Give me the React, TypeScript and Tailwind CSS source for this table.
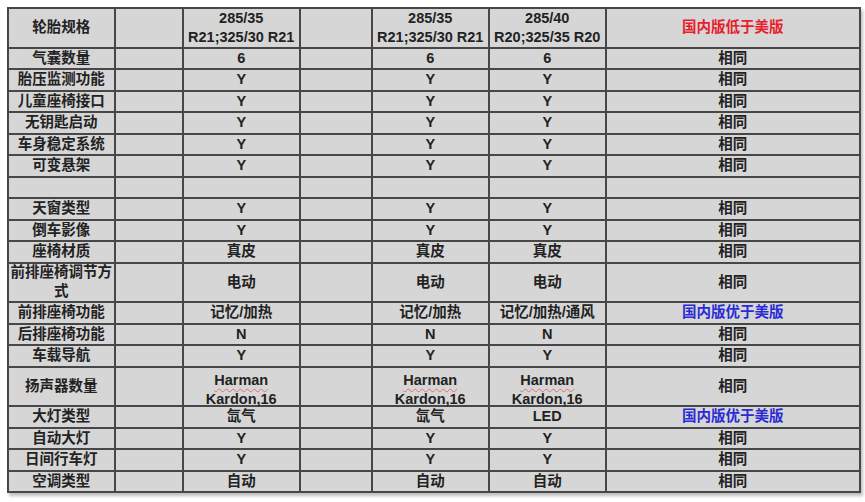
import React from "react";

type Cell = { t: string; c?: "red" | "blue"; hk?: boolean };
type Row = { cells: (string | Cell)[]; tall?: boolean };

const HK: Cell = { t: "", hk: true };
const Y4 = ["", "Y", "", "Y", "Y", "相同"];

const rows: Row[] = [
  {
    tall: true,
    cells: [
      "轮胎规格",
      "",
      "285/35\nR21;325/30 R21",
      "",
      "285/35\nR21;325/30 R21",
      "285/40\nR20;325/35 R20",
      { t: "国内版低于美版", c: "red" },
    ],
  },
  { cells: ["气囊数量", "", "6", "", "6", "6", "相同"] },
  { cells: ["胎压监测功能", ...Y4] },
  { cells: ["儿童座椅接口", ...Y4] },
  { cells: ["无钥匙启动", ...Y4] },
  { cells: ["车身稳定系统", ...Y4] },
  { cells: ["可变悬架", ...Y4] },
  { cells: ["", "", "", "", "", "", ""] },
  { cells: ["天窗类型", ...Y4] },
  { cells: ["倒车影像", ...Y4] },
  { cells: ["座椅材质", "", "真皮", "", "真皮", "真皮", "相同"] },
  { tall: true, cells: ["前排座椅调节方式", "", "电动", "", "电动", "电动", "相同"] },
  {
    cells: [
      "前排座椅功能",
      "",
      "记忆/加热",
      "",
      "记忆/加热",
      "记忆/加热/通风",
      { t: "国内版优于美版", c: "blue" },
    ],
  },
  { cells: ["后排座椅功能", "", "N", "", "N", "N", "相同"] },
  { cells: ["车载导航", ...Y4] },
  { tall: true, cells: ["扬声器数量", "", HK, "", HK, HK, "相同"] },
  { cells: ["大灯类型", "", "氙气", "", "氙气", "LED", { t: "国内版优于美版", c: "blue" }] },
  { cells: ["自动大灯", ...Y4] },
  { cells: ["日间行车灯", ...Y4] },
  { cells: ["空调类型", "", "自动", "", "自动", "自动", "相同"] },
];

function Content({ v }: { v: string | Cell }) {
  const cell: Cell = typeof v === "string" ? { t: v } : v;
  if (cell.hk) {
    return (
      <div className="leading-[19px] text-[#222222] pt-[7px]">
        <div>
          <span className="underline decoration-wavy decoration-[#e07070] decoration-1 underline-offset-[3px]">Harman</span>
        </div>
        <div>
          <span className="underline decoration-wavy decoration-[#e07070] decoration-1 underline-offset-[3px]">Kardon</span>,16
        </div>
      </div>
    );
  }
  const color =
    cell.c === "red" ? "text-[#e8202c]" : cell.c === "blue" ? "text-[#2b2bd6]" : "text-[#222222]";
  return (
    <div className={`${color} leading-[19px] whitespace-pre-line`}>{cell.t}</div>
  );
}

export default function App() {
  return (
    <div className="bg-white w-[865px] h-[502px] pt-[7px] pl-[7px]">
      <div
        className="inline-grid grid-cols-[105.5px_66.5px_115.5px_70.5px_115.5px_115.5px_252.5px] gap-x-[1.5px] gap-y-[2px] px-[1.5px] py-[2px] bg-[#474747] shadow-[2px_3px_3px_rgba(0,0,0,0.25)] font-bold text-[14.5px]"
        style={{ fontFamily: '"Liberation Sans", Arial, "Noto Sans CJK SC", sans-serif' }}
      >
        {rows.map((r, i) =>
          r.cells.map((c, j) => (
            <div
              key={`${i}-${j}`}
              className={`bg-[#d6d6d6] flex items-center justify-center text-center overflow-visible ${
                r.tall ? "h-[37.5px]" : "h-[19.5px]"
              }`}
            >
              <Content v={c} />
            </div>
          ))
        )}
      </div>
    </div>
  );
}
